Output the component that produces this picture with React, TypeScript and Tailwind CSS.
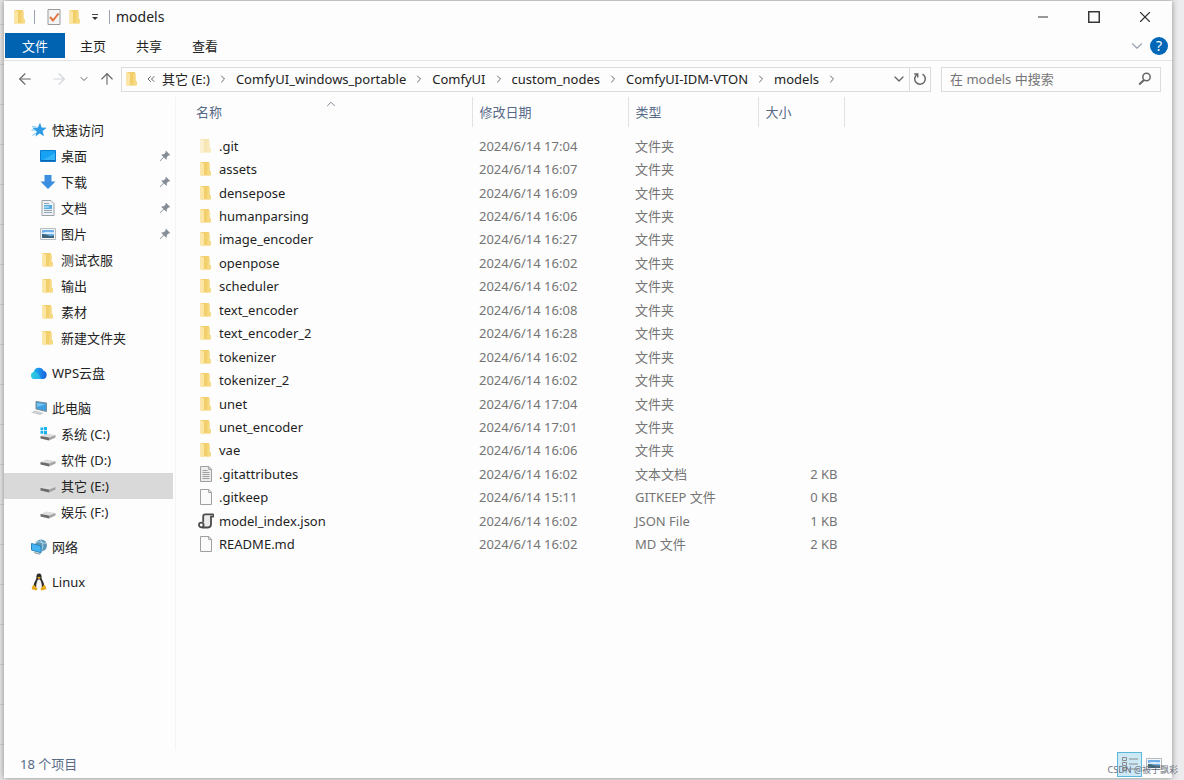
import type { ReactNode } from "react";
import {
  ArrowLeft,
  ArrowRight,
  ArrowUp,
  ChevronDown,
  ChevronRight,
  ChevronUp,
  ChevronsLeft,
  Minus,
  Square,
  X,
} from "lucide-react";

type FileKind = "hidden" | "folder" | "text" | "blank" | "json";

const files: { name: string; date: string; type: string; size?: string; kind: FileKind }[] = [
  { name: ".git", date: "2024/6/14 17:04", type: "文件夹", kind: "hidden" },
  { name: "assets", date: "2024/6/14 16:07", type: "文件夹", kind: "folder" },
  { name: "densepose", date: "2024/6/14 16:09", type: "文件夹", kind: "folder" },
  { name: "humanparsing", date: "2024/6/14 16:06", type: "文件夹", kind: "folder" },
  { name: "image_encoder", date: "2024/6/14 16:27", type: "文件夹", kind: "folder" },
  { name: "openpose", date: "2024/6/14 16:02", type: "文件夹", kind: "folder" },
  { name: "scheduler", date: "2024/6/14 16:02", type: "文件夹", kind: "folder" },
  { name: "text_encoder", date: "2024/6/14 16:08", type: "文件夹", kind: "folder" },
  { name: "text_encoder_2", date: "2024/6/14 16:28", type: "文件夹", kind: "folder" },
  { name: "tokenizer", date: "2024/6/14 16:02", type: "文件夹", kind: "folder" },
  { name: "tokenizer_2", date: "2024/6/14 16:02", type: "文件夹", kind: "folder" },
  { name: "unet", date: "2024/6/14 17:04", type: "文件夹", kind: "folder" },
  { name: "unet_encoder", date: "2024/6/14 17:01", type: "文件夹", kind: "folder" },
  { name: "vae", date: "2024/6/14 16:06", type: "文件夹", kind: "folder" },
  { name: ".gitattributes", date: "2024/6/14 16:02", type: "文本文档", size: "2 KB", kind: "text" },
  { name: ".gitkeep", date: "2024/6/14 15:11", type: "GITKEEP 文件", size: "0 KB", kind: "blank" },
  { name: "model_index.json", date: "2024/6/14 16:02", type: "JSON File", size: "1 KB", kind: "json" },
  { name: "README.md", date: "2024/6/14 16:02", type: "MD 文件", size: "2 KB", kind: "blank" },
];

const crumbs = ["其它 (E:)", "ComfyUI_windows_portable", "ComfyUI", "custom_nodes", "ComfyUI-IDM-VTON", "models"];

function FolderIcon({ faded = false }: { faded?: boolean }) {
  return (
    <svg viewBox="0 0 16 16" className={faded ? "size-4 shrink-0 opacity-50" : "size-4 shrink-0"}>
      <path d="M2.5 1H11v13.5H2.5z" fill="#f3cf6b" />
      <path d="M9.5 2.5h2.3v7l1.2 1v4H9z" fill="#f6d983" />
      <path d="M2.5 1 6 2.6V15.5l-3.5-1.4z" fill="#fbe6a5" />
    </svg>
  );
}

function FileIcon({ kind }: { kind: FileKind }) {
  if (kind === "folder" || kind === "hidden") return <FolderIcon faded={kind === "hidden"} />;
  if (kind === "json") {
    return (
      <svg viewBox="0 0 16 16" className="size-4 shrink-0" fill="none">
        <path d="M5 2.5h8V12a2.3 2.3 0 0 1-2.3 2.3H5z" fill="#ebebeb" />
        <path d="M5.2 9V3.6C5.2 2 6 1.3 7.200 1.300h7.600c1.200 0 1 2.400 0 2.400H13V11c0 2.300-1.200 3.500-3 3.500H4" stroke="#4b4b4b" strokeWidth="1.8" />
        <circle cx="3.3" cy="12" r="2.300" fill="#fff" stroke="#4b4b4b" strokeWidth="1.8" />
      </svg>
    );
  }
  return (
    <svg viewBox="0 0 16 16" className="size-4 shrink-0" fill="none" stroke="#a0a0a0">
      <path d="M2.5.5h8.4l2.6 2.8v12.2h-11z" fill={kind === "text" ? "#ededed" : "#fafafa"} />
      <path d="M10.7.7v2.8h2.6" />
      {kind === "text" && <path d="M4.5 4.5h5M4.5 6.5h7M4.5 8.5h7M4.5 10.5h7M4.5 12.5h7" />}
    </svg>
  );
}

function StarIcon() {
  return (
    <svg viewBox="0 0 16 16" className="size-4">
      <path d="m9 .8 1.6 4.6 5 .3-3.9 3.2 1.2 5.3-4.2-2.7-4.3 3 1.3-5L1.6 6l5.2-.5z" fill="#2f9be6" />
      <path d="M1 4.8h4M.5 8h4M1.5 13.5 5 11" stroke="#6cc0f3" />
    </svg>
  );
}

function DesktopIcon() {
  return (
    <svg viewBox="0 0 16 16" className="size-4">
      <path d="M.5 2.5h15v11H.5z" fill="#17a1f2" stroke="#0b7ccf" />
      <path d="M1 13 15 5v8z" fill="#36b4f8" />
      <path d="M1 12.5h14" stroke="#0c68b5" />
    </svg>
  );
}

function DownloadIcon() {
  return (
    <svg viewBox="0 0 16 16" className="size-4">
      <path d="M4.5 1h7v6.5h4L8 15 .5 7.5h4z" fill="#3b8fde" />
    </svg>
  );
}

function DocumentIcon() {
  return (
    <svg viewBox="0 0 16 16" className="size-4">
      <path d="M2 .5h9l3 3v12H2z" fill="#eef2f5" stroke="#9aa2a8" />
      <path d="M4 3.5h5M4 10.5h8M4 12.5h8" stroke="#8fa3b3" />
      <path d="M4 5h8v4H4z" fill="#52aee0" />
      <path d="M4 7h5" stroke="#d7f0fb" />
    </svg>
  );
}

function PictureIcon() {
  return (
    <svg viewBox="0 0 16 16" className="size-4">
      <path d="M.5 2.5h15v11H.5z" fill="#f4f6f8" stroke="#b4babf" />
      <path d="M2 4h12v8H2z" fill="#6fb0ec" />
      <path d="M2 7c4-2 8 0 12-1v2H2z" fill="#d9edfa" />
      <path d="m2 8 4 .5 4 1.500 4-.5V12H2z" fill="#3d6577" />
    </svg>
  );
}

function CloudIcon() {
  return (
    <svg viewBox="0 0 16 16" className="size-4">
      <defs>
        <linearGradient id="cloud" x1="0" x2="1">
          <stop offset="0" stopColor="#26cddd" />
          <stop offset="0.5" stopColor="#1c91ed" />
          <stop offset="1" stopColor="#1960d8" />
        </linearGradient>
      </defs>
      <path d="M3.500 14a3.500 3.500 0 0 1-.8-6.900A5.200 5.200 0 0 1 12.600 5.800 4.200 4.200 0 0 1 12 14z" fill="url(#cloud)" />
      <path d="M2.800 7.200c3.200-1 5.200 1 7.200 6.800H3.500a3.500 3.500 0 0 1-.7-6.800z" fill="#31d2e4" opacity="0.55" />
    </svg>
  );
}

function ComputerIcon() {
  return (
    <svg viewBox="0 0 16 16" className="size-4">
      <path d="M5 1.5 15.5 3v8.5L5 9z" fill="#3f9fdf" stroke="#7c8b96" />
      <path d="m6 3 8.5 1.2L6 7z" fill="#79c5f2" />
      <path d="m4 10.5 9 2.5-4 2-9-2.5z" fill="#c9cdd0" />
    </svg>
  );
}

function DriveIcon({ system = false }: { system?: boolean }) {
  return (
    <svg viewBox="0 0 16 16" className="size-4">
      <path d="m.5 10 6-2.500 9 1.500-6.500 2.500z" fill="#dedede" />
      <path d="m.5 10 8.500 1.500v3L.5 12.500z" fill="#6b6b6b" />
      <path d="m9 11.500 6.500-2.500v2.500L9 14.500z" fill="#a3a3a3" />
      {system && <path d="M.5 1.5h2.8v2.8H.5zM4 1h3v3.3H4zM.5 5h2.8v2.8H.5zM4 5h3v3.3H4z" fill="#16b1ef" />}
    </svg>
  );
}

function NetworkIcon() {
  return (
    <svg viewBox="0 0 16 16" className="size-4">
      <circle cx="10" cy="6.500" r="6" fill="#5c97b8" />
      <path d="M5 3.500c3-2.500 6 1.500 10.500.5M9 .8c3.500 3 3.500 8 1 11.500" stroke="#b5dcec" fill="none" />
      <path d="M.5 4.500 10 7v6.800L.5 11z" fill="#46b4f2" stroke="#2a83bd" />
      <path d="m4 13 6 1.800-1.500.9-6-1.700z" fill="#9aa6ad" />
    </svg>
  );
}

function LinuxIcon() {
  return (
    <svg viewBox="0 0 16 18" className="h-[18px] w-4">
      <path d="M8 .5C5.8.5 5.200 2 5.400 5c0 2-3 4.500-2.800 9.200h10.800C13.600 9.500 10.600 7 10.600 5 10.800 2 10.200.5 8 .5z" fill="#2c2c2c" />
      <path d="M8 6c-2 1.500-3 4-2.800 8.500L8 16l2.800-1.500C11 10 10 7.500 8 6z" fill="#f5f5f5" />
      <path d="m6.200 4.600 1.800-.8 1.800.8L8 6.200z" fill="#e8a91b" />
      <path d="m3 11.800 3.500 3.900-.8 1.800-5-1.200.6-3zM13 11.800l-3.500 3.900.8 1.800 5-1.200-.6-3z" fill="#e5a91c" />
    </svg>
  );
}

function PinIcon() {
  return (
    <svg viewBox="0 0 12 12" className="size-3 text-[#858e97]">
      <path d="m7 .8 4.200 4.200-1 .6-.7-.2-1.800 1.800c.4 1.200.1 2-.5 2.600L5 7.600 1.200 11.200l-.5-.5L4.400 7 2.200 4.800c.7-.6 1.500-.8 2.600-.5l1.800-1.700-.2-.8z" fill="currentColor" />
    </svg>
  );
}

function TreeItem({ icon, label, root = false, pinned = false, selected = false }: {
  icon: ReactNode;
  label: string;
  root?: boolean;
  pinned?: boolean;
  selected?: boolean;
}) {
  return (
    <li className={selected ? "mr-0.5 bg-[#d9d9d9]" : "mr-0.5"}>
      <a href="#" className={root ? "flex h-[26px] items-center gap-[5px] pl-[27px]" : "flex h-[26px] items-center gap-[5px] pl-9"}>
        {icon}
        <span className="flex-1 whitespace-nowrap">{label}</span>
        {pinned && <span className="mr-0.5"><PinIcon /></span>}
      </a>
    </li>
  );
}

function TitleBar() {
  return (
    <header className="flex h-8 items-center">
      <div className="flex flex-1 items-center pl-2">
        <FolderIcon />
        <span className="ml-1.5 h-3.5 w-px bg-gray-400" />
        <button aria-label="属性" className="ml-3">
          <svg viewBox="0 0 14 16" className="h-4 w-3.5" fill="none">
            <path d="M1 .5h12v15H1z" fill="#f5f5f5" stroke="#9a9a9a" />
            <path d="m3 8 3 3.500 5.500-7" stroke="#e2723f" strokeWidth="2" />
          </svg>
        </button>
        <button aria-label="新建文件夹" className="ml-1.5">
          <FolderIcon />
        </button>
        <button aria-label="自定义快速访问工具栏" className="ml-2">
          <svg viewBox="0 0 8 8" className="size-2">
            <path d="M1 1.500h6" stroke="#444" />
            <path d="M1 4h6L4 7z" fill="#333" />
          </svg>
        </button>
        <span className="ml-2.5 h-3.5 w-px bg-gray-400" />
        <h1 className="ml-1.5 text-sm">models</h1>
      </div>
      <div className="flex pr-0.5 text-[#333]">
        <button aria-label="最小化" className="flex h-8 w-[51px] items-center justify-center"><Minus size={16} strokeWidth={1.5} /></button>
        <button aria-label="最大化" className="flex h-8 w-[51px] items-center justify-center"><Square size={14} rx={0} strokeWidth={2.5} strokeLinejoin="miter" className="[&>rect]:[rx:0]" /></button>
        <button aria-label="关闭" className="flex h-8 w-[51px] items-center justify-center"><X size={18} strokeWidth={1.5} /></button>
      </div>
    </header>
  );
}

function Ribbon() {
  return (
    <nav className="flex h-7 items-start border-b border-[#e4e4e4]">
      <button className="ml-px h-[25px] w-[60px] bg-[#0063b1] text-white">文件</button>
      <button className="h-[25px] w-14">主页</button>
      <button className="h-[25px] w-14">共享</button>
      <button className="h-[25px] w-14">查看</button>
      <div className="ml-auto flex h-[25px] items-center gap-1 pr-1">
        <button aria-label="展开功能区"><ChevronDown size={18} strokeWidth={1.5} className="text-gray-400" /></button>
        <button className="size-[18px] rounded-full bg-[#0067b8] text-sm leading-[18px] text-white">?</button>
      </div>
    </nav>
  );
}

function AddressBar() {
  return (
    <div className="flex h-9 items-center pr-[11px] text-[#666]">
      <button aria-label="后退" className="ml-3"><ArrowLeft size={18} strokeWidth={1.5} /></button>
      <button aria-label="前进" className="ml-4 text-gray-300"><ArrowRight size={18} strokeWidth={1.5} /></button>
      <button aria-label="最近浏览的位置" className="ml-2.5"><ChevronDown size={12} /></button>
      <button aria-label="上移" className="ml-2"><ArrowUp size={18} strokeWidth={1.5} /></button>
      <div className="ml-[5px] flex h-[25px] flex-1 items-center border border-[#dcdcdc]">
        <span className="ml-0.5"><FolderIcon /></span>
        <ChevronsLeft size={12} className="mx-[5px]" />
        {crumbs.map((crumb) => (
          <div key={crumb} className="flex items-center">
            <a href="#" className="whitespace-nowrap text-[#222]">{crumb}</a>
            <ChevronRight size={12} className="mx-[7px]" />
          </div>
        ))}
        <button aria-label="以前的位置" className="ml-auto flex h-full w-5 items-center justify-center"><ChevronDown size={16} /></button>
        <button aria-label="刷新" className="flex h-full w-[21px] items-center justify-center border-l border-[#dcdcdc]">
          <svg viewBox="0 0 14 14" className="size-3.5" fill="none" stroke="currentColor" strokeWidth="1.5">
            <path d="M9.500 2.200a5.300 5.300 0 1 1-5.500.3" />
            <path d="M1.200 2h3.500v3.500" />
          </svg>
        </button>
      </div>
      <label className="ml-2.5 flex h-[25px] w-[220px] items-center border border-[#dcdcdc] px-2">
        <input type="search" aria-label="搜索" placeholder="在 models 中搜索" className="min-w-0 flex-1 outline-none placeholder:text-[#757575]" />
        <svg viewBox="0 0 14 14" className="size-3.5" fill="none" stroke="currentColor">
          <circle cx="8.5" cy="5" r="3.7" strokeWidth="1.5" />
          <path d="M6 8 1.2 12.5" strokeWidth="2" />
        </svg>
      </label>
    </div>
  );
}

function Sidebar() {
  return (
    <aside className="flex w-[172px] shrink-0 flex-col gap-[9px] border-r border-[#f4f4f4] pt-5">
      <ul>
        <TreeItem root icon={<StarIcon />} label="快速访问" />
        <TreeItem pinned icon={<DesktopIcon />} label="桌面" />
        <TreeItem pinned icon={<DownloadIcon />} label="下载" />
        <TreeItem pinned icon={<DocumentIcon />} label="文档" />
        <TreeItem pinned icon={<PictureIcon />} label="图片" />
        <TreeItem icon={<FolderIcon />} label="测试衣服" />
        <TreeItem icon={<FolderIcon />} label="输出" />
        <TreeItem icon={<FolderIcon />} label="素材" />
        <TreeItem icon={<FolderIcon />} label="新建文件夹" />
      </ul>
      <ul>
        <TreeItem root icon={<CloudIcon />} label="WPS云盘" />
      </ul>
      <ul>
        <TreeItem root icon={<ComputerIcon />} label="此电脑" />
        <TreeItem icon={<DriveIcon system />} label="系统 (C:)" />
        <TreeItem icon={<DriveIcon />} label="软件 (D:)" />
        <TreeItem selected icon={<DriveIcon />} label="其它 (E:)" />
        <TreeItem icon={<DriveIcon />} label="娱乐 (F:)" />
      </ul>
      <ul>
        <TreeItem root icon={<NetworkIcon />} label="网络" />
      </ul>
      <ul>
        <TreeItem root icon={<LinuxIcon />} label="Linux" />
      </ul>
    </aside>
  );
}

function FileTable() {
  return (
    <main className="min-w-0 flex-1 pl-[13px]">
      <table className="h-[459px] w-[656px] table-fixed">
        <thead>
          <tr className="h-[30px] text-left text-[#566a87]">
            <th className="relative w-[283px] border-r border-[#e2e2e2] px-[7px] font-normal">
              名称
              <ChevronUp size={14} strokeWidth={1.5} className="absolute top-0 left-[135px] text-gray-500" />
            </th>
            <th className="w-[156px] border-r border-[#e2e2e2] px-[7px] font-normal">修改日期</th>
            <th className="w-[130px] border-r border-[#e2e2e2] px-[7px] font-normal">类型</th>
            <th className="border-r border-[#e2e2e2] px-[7px] font-normal">大小</th>
          </tr>
          <tr className="h-[7px]" />
        </thead>
        <tbody className="text-[#757575]">
          {files.map((file) => (
            <tr key={file.name}>
              <td className="pl-[9px] text-[#1f1f1f]">
                <a href="#" className="flex items-center gap-[5px]">
                  <FileIcon kind={file.kind} />
                  {file.name}
                </a>
              </td>
              <td className="px-[7px]">{file.date}</td>
              <td className="px-[7px]">{file.type}</td>
              <td className="pr-[7px] text-right">{file.size}</td>
            </tr>
          ))}
        </tbody>
      </table>
    </main>
  );
}

function StatusBar() {
  return (
    <footer className="flex h-7 items-center pl-4 text-[#566a87]">
      <span>18 个项目</span>
      <div className="ml-auto flex h-full items-center gap-1 pr-2.5">
        <button aria-label="详细信息" className="flex size-[25px] items-center justify-center border border-[#5bb8d8] bg-[#cce9f5]">
          <svg viewBox="0 0 18 14" className="h-3.5 w-[18px]" stroke="#8b8b8b" fill="none">
            <path d="M1.500.5h4v3h-4zM1.500 5.500h4v3h-4zM1.500 10.500h4v3h-4zM8 2h9M8 7h9M8 12h9" />
          </svg>
        </button>
        <button aria-label="大缩略图"><PictureIcon /></button>
      </div>
    </footer>
  );
}

// Sliver of the window that lies behind the explorer on the left
function BackgroundEdge() {
  return (
    <div className="w-1 shrink-0 overflow-hidden bg-[#e6e6e6] pt-6">
      {Array.from({ length: 19 }, (_, i) => (
        <div key={i} className="h-10 border-t border-[#cbcbcb]" />
      ))}
    </div>
  );
}

export default function App() {
  return (
    <div className="relative flex h-screen overflow-hidden bg-[#ececee] font-['Noto_Sans','Noto_Sans_CJK_SC',sans-serif] text-[13px] leading-5 text-[#222]">
      <BackgroundEdge />
      <div className="mt-px mr-3 mb-0.5 flex min-w-0 flex-1 flex-col bg-[#fdfdfd] shadow-[0_0_6px_#888]">
        <TitleBar />
        <Ribbon />
        <AddressBar />
        <div className="flex min-h-0 flex-1">
          <Sidebar />
          <FileTable />
        </div>
        <StatusBar />
      </div>
      <span className="absolute right-1.5 bottom-0.5 text-[9px] leading-4 text-gray-500">CSDN @被子飘彩</span>
    </div>
  );
}
